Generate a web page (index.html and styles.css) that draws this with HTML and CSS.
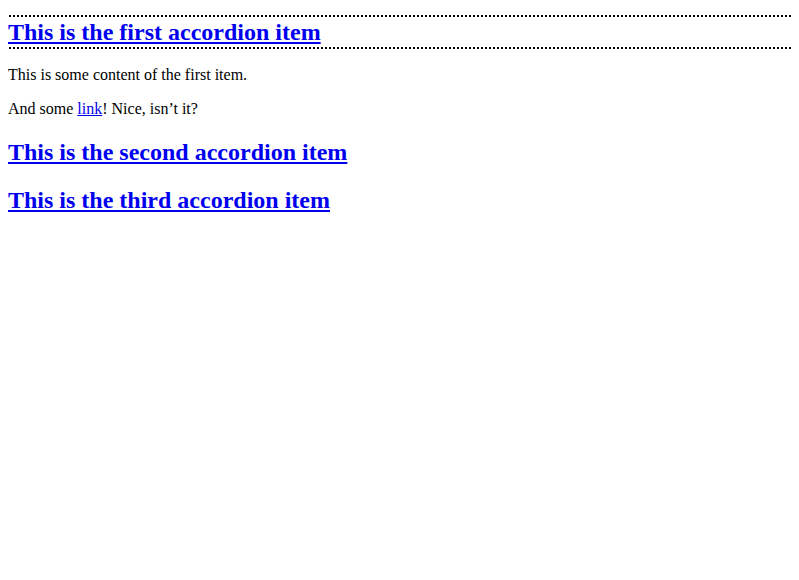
FILE: index.html
```html
<!DOCTYPE html>
<html lang="en">
<head>
<meta charset="utf-8">
<title>Accordion</title>
<link rel="stylesheet" href="styles.css">
</head>
<body>
<div class="accordion">
  <h2 class="accordion-title"><a class="accordion-link is-focused" href="#item1">This is the first accordion item</a></h2>
  <div class="accordion-content">
    <p>This is some content of the first item.</p>
    <p>And some <a href="#">link</a>! Nice, isn’t it?</p>
  </div>
  <h2 class="accordion-title"><a class="accordion-link" href="#item2">This is the second accordion item</a></h2>
  <h2 class="accordion-title"><a class="accordion-link" href="#item3">This is the third accordion item</a></h2>
</div>
</body>
</html>
```

FILE: styles.css
```css
html, body {
  background: #fff;
}
body {
  margin: 8px;
  font-family: "Liberation Serif", "Times New Roman", serif;
  font-size: 16px;
  color: #000;
}
.accordion {
  padding-top: 10px;
}
.accordion-title {
  font-size: 24px;
  font-weight: bold;
  line-height: 28px;
  margin: 20px 0;
}
.accordion-title:first-child {
  margin-top: 0;
}
.accordion-link {
  display: block;
  color: #0000ee;
  text-decoration: underline;
}
.accordion-link.is-focused {
  position: relative;
}
.accordion-link.is-focused::after {
  content: "";
  position: absolute;
  top: -3px;
  bottom: -3px;
  left: -3px;
  right: -3px;
  pointer-events: none;
  background-image:
    repeating-linear-gradient(to right, #000 0 2px, transparent 2px 4px),
    repeating-linear-gradient(to right, #000 0 2px, transparent 2px 4px),
    repeating-linear-gradient(to bottom, #000 0 2px, transparent 2px 4px),
    repeating-linear-gradient(to bottom, #000 0 2px, transparent 2px 4px);
  background-size: 100% 2px, 100% 2px, 2px 100%, 2px 100%;
  background-position: left top, left bottom, left top, right top;
  background-repeat: no-repeat;
}
.accordion-content p {
  margin: 16px 0;
  line-height: 18px;
}
a {
  color: #0000ee;
}
```
